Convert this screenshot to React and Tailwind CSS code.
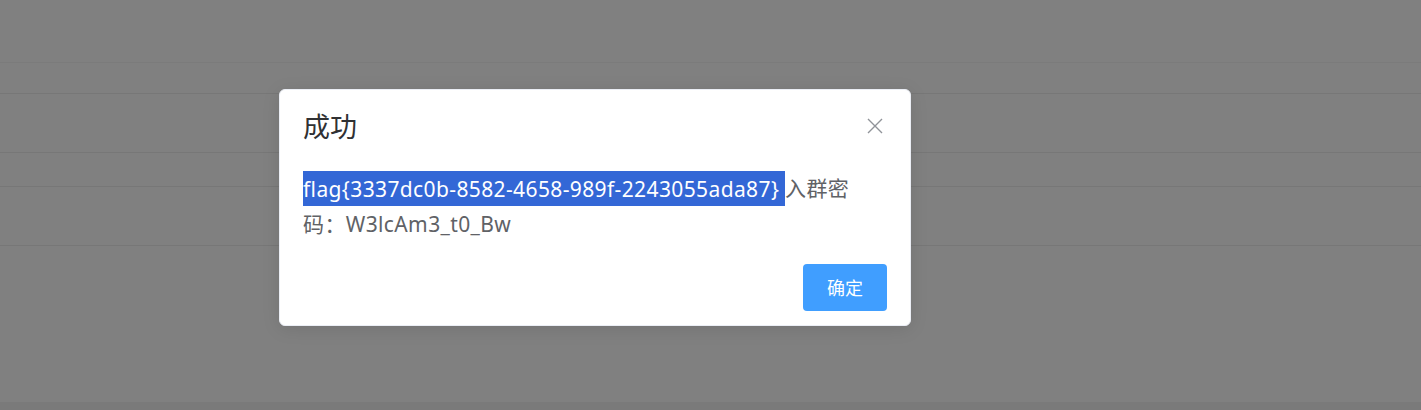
const rows = [
  { h: 'h-[63px]', line: 'border-[#7b7b7b]' },
  { h: 'h-[31px]', line: 'border-[#777777]' },
  { h: 'h-[59px]', line: 'border-[#777777]' },
  { h: 'h-[34px]', line: 'border-[#777777]' },
  { h: 'h-[59px]', line: 'border-[#777777]' },
];

const MessageBox = () => (
  <div className="absolute left-[279px] top-[89px] w-[632px] rounded-[6px] border border-[#ebeef5] bg-white shadow-[0_3px_18px_0_rgba(0,0,0,0.1)]">
    {/* header */}
    <div className="relative px-[23px] pt-[23px] pb-[15px]">
      <div className="text-[27px] leading-[27px] text-[#303133]">成功</div>
      <button className="absolute right-[27px] top-[28px] w-[16px] h-[16px] text-[#909399]">
        <svg viewBox="0 0 16 16" className="w-[16px] h-[16px]" fill="none" stroke="currentColor" strokeWidth="1.4">
          <path d="M1 1L15 15M15 1L1 15" />
        </svg>
      </button>
    </div>

    {/* content */}
    <div className="px-[23px] py-[15px] text-[21px] leading-[36px] tracking-[0.38px] text-[#606266]">
      <span className="bg-[#3367d6] py-[3.5px] text-white">flag{'{'}3337dc0b-8582-4658-989f-2243055ada87{'}'} </span>
      入群密
      <br />
      码：W3lcAm3_t0_Bw
    </div>

    {/* buttons */}
    <div className="flex justify-end px-[23px] pt-[7px] pb-[14px]">
      <button className="w-[84px] h-[47px] rounded-[4px] bg-[#409eff] text-[18px] leading-[18px] text-white">
        确定
      </button>
    </div>
  </div>
);

export default function App() {
  return (
    <div className="relative w-[1421px] h-[410px] overflow-hidden bg-[#808080] font-['Noto_Sans','Noto_Sans_CJK_SC',sans-serif]">
      <div className="flex flex-col h-full">
        {rows.map((r, i) => (
          <div key={i} className={`${r.h} border-b ${r.line}`} />
        ))}
        <div className="flex-1" />
        <div className="h-[8px] bg-[#7a7a7a]" />
      </div>
      <MessageBox />
    </div>
  );
}
